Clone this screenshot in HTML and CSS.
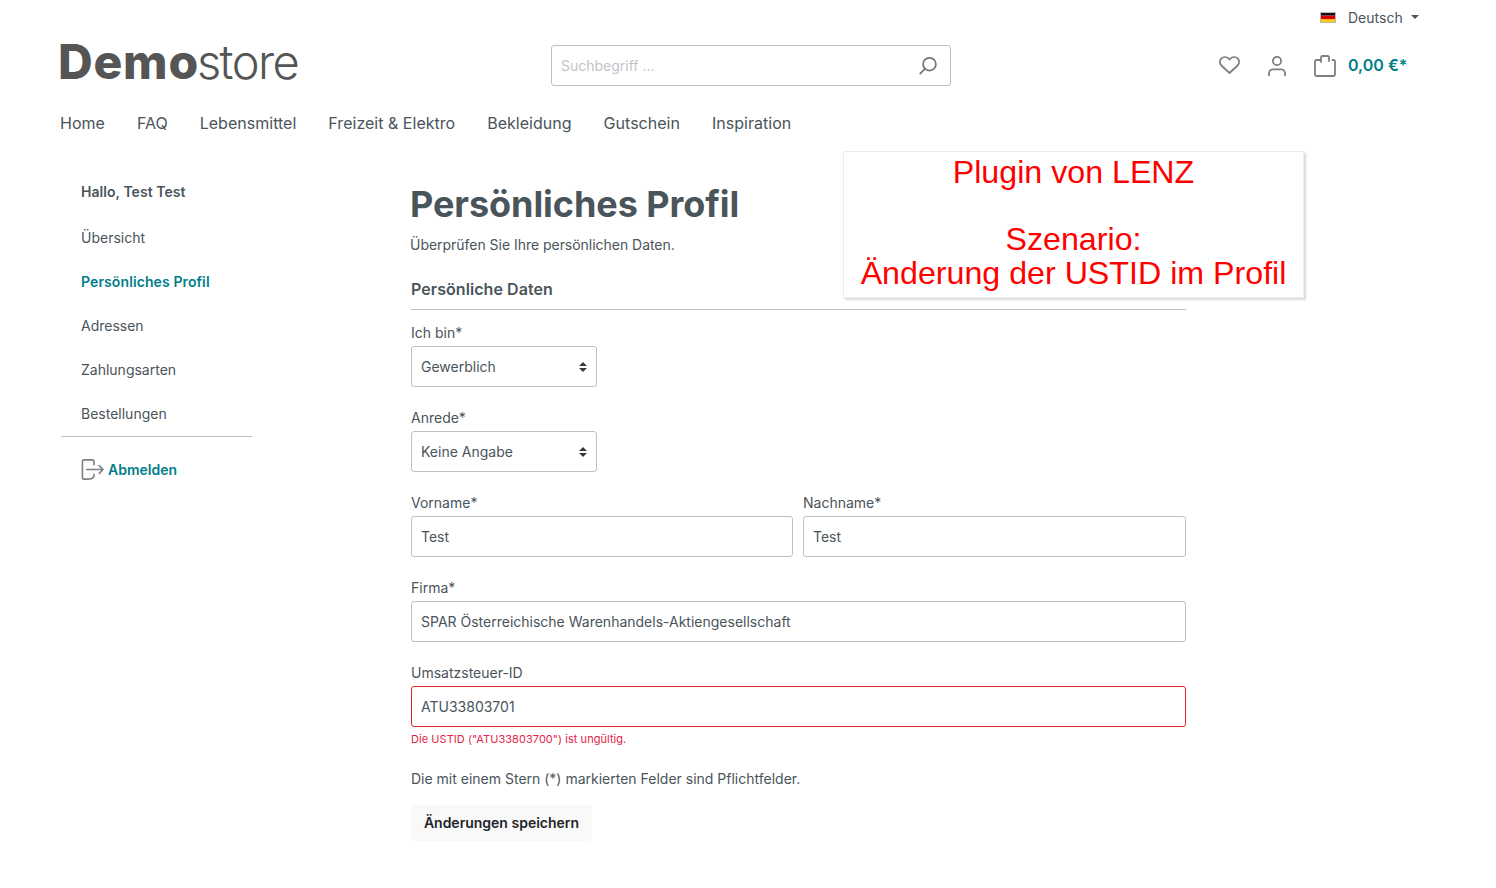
FILE: index.html
```html
<!DOCTYPE html>
<html lang="de">
<head>
    <meta charset="UTF-8">
    <title>Persönliches Profil</title>
    <link rel="stylesheet" href="styles.css">
</head>
<body>

<div class="top-bar">
    <svg class="flag" width="16" height="11" viewBox="0 0 16 11">
        <rect width="16" height="3.67" fill="#111"/>
        <rect y="3.67" width="16" height="3.67" fill="#d00"/>
        <rect y="7.33" width="16" height="3.67" fill="#ffce00"/>
    </svg>
    <span class="lang">Deutsch</span>
    <span class="caret"></span>
</div>

<header class="header">
    <a class="logo"><b>Demo</b>store</a>
    <div class="search">
        <input type="text" placeholder="Suchbegriff ...">
        <svg width="22" height="22" viewBox="0 0 22 22" fill="none" stroke="#6f757b" stroke-width="1.7" stroke-linecap="round">
            <circle cx="12.5" cy="9.2" r="6.4"/>
            <path d="M7.8 13.8 3.2 18.6"/>
        </svg>
    </div>
    <div class="actions">
        <span class="action action-heart">
            <svg width="21" height="18" viewBox="0 0 21 18" fill="none" stroke="#7c7f83" stroke-width="1.800" stroke-linejoin="round">
                <path d="M10.500 17 2.400 9.500C.3 7.400.5 4.200 2.400 2.400 4.500.5 7.800.6 10.500 3.500 13.200.6 16.500.5 18.600 2.400 20.500 4.200 20.700 7.400 18.600 9.500Z"/>
            </svg>
        </span>
        <span class="action">
            <svg width="18" height="20" viewBox="0 0 18 20" fill="none" stroke="#7c7f83" stroke-width="1.800" stroke-linecap="round">
                <circle cx="9" cy="5" r="4.100"/>
                <path d="M1 19.500V17.500C1 15 3 13.300 5 13.300H13C15 13.300 17 15 17 17.500V19.500"/>
            </svg>
        </span>
        <span class="action action-bag">
            <svg width="22" height="22" viewBox="0 0 22 22" fill="none" stroke="#7c7f83" stroke-width="1.800" stroke-linecap="round" stroke-linejoin="round">
                <path d="M7 5H2.500A1.500 1.500 0 0 0 1 6.500V19.500A1.500 1.500 0 0 0 2.500 21H19.500A1.500 1.500 0 0 0 21 19.500V6.500A1.500 1.500 0 0 0 19.500 5H18.500"/>
                <path d="M7 7V2.500A1.500 1.500 0 0 1 8.500 1H13.500A1.500 1.500 0 0 1 15 2.500V6"/>
            </svg>
        </span>
        <span class="price">0,00 €*</span>
    </div>
</header>

<nav class="main-nav">
    <a>Home</a>
    <a>FAQ</a>
    <a>Lebensmittel</a>
    <a>Freizeit &amp; Elektro</a>
    <a>Bekleidung</a>
    <a>Gutschein</a>
    <a>Inspiration</a>
</nav>

<div class="content">
    <aside class="sidebar">
        <div class="hello">Hallo, Test Test</div>
        <a class="side-link">Übersicht</a>
        <a class="side-link active">Persönliches Profil</a>
        <a class="side-link">Adressen</a>
        <a class="side-link">Zahlungsarten</a>
        <a class="side-link">Bestellungen</a>
        <a class="logout">
            <svg width="23" height="23" viewBox="0 0 24 24" fill="none" stroke="#7c7f83" stroke-width="1.700" stroke-linecap="round" stroke-linejoin="round">
                <path d="M13.500 7V3.500A1.500 1.500 0 0 0 12 2H3a1.500 1.500 0 0 0-1.500 1.500v17A1.500 1.500 0 0 0 3 22h3.500c5 0 7-1 7-3.500V17"/>
                <path d="M6 12h17M19 8l4 4-4 4"/>
            </svg>
            Abmelden
        </a>
    </aside>

    <main class="profile">
        <h1>Persönliches Profil</h1>
        <p class="intro">Überprüfen Sie Ihre persönlichen Daten.</p>
        <h2>Persönliche Daten</h2>

        <form>
            <div class="field select-field">
                <label>Ich bin*</label>
                <div class="select-wrap">
                    <select><option>Gewerblich</option></select>
                    <svg width="8" height="12" viewBox="0 0 8 12" fill="#343a40"><path d="M4 1 8 5H0ZM4 11 0 7h8Z"/></svg>
                </div>
            </div>
            <div class="field select-field">
                <label>Anrede*</label>
                <div class="select-wrap">
                    <select><option>Keine Angabe</option></select>
                    <svg width="8" height="12" viewBox="0 0 8 12" fill="#343a40"><path d="M4 1 8 5H0ZM4 11 0 7h8Z"/></svg>
                </div>
            </div>
            <div class="field-row">
                <div class="field">
                    <label>Vorname*</label>
                    <input type="text" value="Test">
                </div>
                <div class="field">
                    <label>Nachname*</label>
                    <input type="text" value="Test">
                </div>
            </div>
            <div class="field">
                <label>Firma*</label>
                <input type="text" value="SPAR Österreichische Warenhandels-Aktiengesellschaft">
            </div>
            <div class="field field-error">
                <label>Umsatzsteuer-ID</label>
                <input type="text" value="ATU33803701">
                <div class="error-msg">Die USTID ("ATU33803700") ist ungültig.</div>
            </div>
            <p class="required-note">Die mit einem Stern (*) markierten Felder sind Pflichtfelder.</p>
            <button type="button" class="save-btn">Änderungen speichern</button>
        </form>
    </main>
</div>

<!-- Hinweisbox liegt über dem Formular -->
<div class="note-box">
    Plugin von LENZ<br><br>
    Szenario:<br>
    Änderung der USTID im Profil
</div>

</body>
</html>
```

FILE: styles.css
```css
* {
    box-sizing: border-box;
}
body {
    margin: 0;
    font-family: Inter, "Noto Sans", sans-serif;
    font-size: 14px;
    line-height: 21px;
    color: #4a545b;
    background-color: #fff;
}
.top-bar {
    display: flex;
    align-items: center;
    height: 35px;
    padding-left: 1320px;
}
.flag {
    outline: 1px solid #b8bcc2;
    outline-offset: -1px;
}
.lang {
    margin-left: 12px;
    color: #4a545b;
}
.caret {
    margin-left: 8px;
    margin-top: -1px;
    border-top: 4px solid #4a545b;
    border-left: 4px solid transparent;
    border-right: 4px solid transparent;
}
.header {
    display: flex;
    align-items: flex-start;
    padding-top: 10px;
    height: 51px;
}
.logo {
    width: 551px;
    margin-top: -8px;
    padding-left: 58px;
    font-size: 47px;
    line-height: 50px;
    font-weight: 300;
    letter-spacing: -1.600px;
    color: #555;
    white-space: nowrap;
}
.logo b {
    margin-right: -2px;
    font-size: 48px;
    font-weight: 800;
    letter-spacing: 0.800px;
}
.search {
    display: flex;
    align-items: center;
    width: 400px;
    height: 41px;
    padding: 0 11px 0 9px;
    border: 1px solid #bcc1c7;
    border-radius: 3px;
}
.search input {
    flex: 1;
    border: none;
    outline: none;
    padding: 0;
    font: inherit;
}
.search input::placeholder {
    color: #c1c5c9;
}
.actions {
    display: flex;
    align-items: center;
    height: 41px;
    margin-left: 254px;
}
.action {
    display: flex;
    justify-content: center;
    width: 48px;
}
.action-heart {
    margin-top: -1px;
}
.action-bag {
    margin-top: 1px;
}
.price {
    margin-left: -1px;
    font-size: 16px;
    font-weight: 600;
    color: #007e8a;
    white-space: nowrap;
}
.main-nav {
    display: flex;
    gap: 32px;
    margin-top: 25px;
    padding-left: 60px;
    font-size: 16px;
    line-height: 24px;
    letter-spacing: 0.020px;
}
.content {
    display: flex;
    padding-left: 61px;
}
.sidebar {
    width: 191px;
    margin-right: 159px;
    padding-top: 46px;
}
.hello {
    padding-left: 20px;
    margin-bottom: 13px;
    font-weight: 600;
    letter-spacing: 0.050px;
}
.side-link {
    display: block;
    padding: 11.5px 0 11.5px 20px;
}
.side-link.active {
    font-weight: 600;
    letter-spacing: 0.100px;
    color: #007e8a;
}
.logout {
    display: flex;
    align-items: center;
    gap: 4px;
    margin-top: 1px;
    padding: 21px 0 0 20px;
    border-top: 1px solid #bcc1c7;
    font-weight: 600;
    color: #007e8a;
}
.profile {
    width: 775px;
    padding-top: 48px;
}
h1 {
    margin: 0 0 0 -1px;
    font-size: 36px;
    line-height: 43px;
    font-weight: 700;
    letter-spacing: -0.060px;
}
.intro {
    margin: 8px 0 0 -1px;
    letter-spacing: -0.030px;
}
h2 {
    margin: 0 0 12px;
    padding: 22px 0 8px;
    border-bottom: 1px solid #bcc1c7;
    font-size: 16px;
    line-height: 24px;
    font-weight: 600;
    letter-spacing: 0.060px;
}
.field {
    margin-bottom: 20px;
}
.field label {
    display: block;
    margin-bottom: 3px;
}
.field input,
.select-wrap select {
    display: block;
    width: 100%;
    height: 41px;
    padding: 0 9px;
    border: 1px solid #bcc1c7;
    border-radius: 3px;
    outline: none;
    background: #fff;
    font: inherit;
    color: #4a545b;
}
.select-field {
    width: 186px;
}
.select-wrap {
    position: relative;
}
.select-wrap select {
    appearance: none;
}
.select-wrap svg {
    position: absolute;
    top: 15px;
    right: 10px;
}
.field-row {
    display: grid;
    grid-template-columns: 382px 1fr;
    gap: 10px;
}
.field-error {
    margin-bottom: 0;
}
.field-error input {
    border-color: #e52427;
}
.error-msg {
    margin-top: 3px;
    font-size: 11px;
    line-height: 18px;
    letter-spacing: 0.050px;
    color: #e52447;
}
.required-note {
    margin: 20px 0 0;
}
.save-btn {
    display: block;
    width: 181px;
    height: 36px;
    margin-top: 16px;
    padding: 0 0 2px;
    border: none;
    border-radius: 3px;
    background-color: #f9f9f9;
    font: inherit;
    font-weight: 600;
    color: #212529;
}
.note-box {
    position: absolute;
    top: 151px;
    left: 843px;
    width: 461px;
    height: 147px;
    padding-top: 4px;
    border: 1px solid #ececec;
    box-shadow: 2px 2px 2px rgba(0, 0, 0, 0.15);
    background-color: #fff;
    font-family: "Liberation Sans", Arial, sans-serif;
    font-size: 32.200px;
    line-height: 33.700px;
    text-align: center;
    color: #ff0000;
}
```
